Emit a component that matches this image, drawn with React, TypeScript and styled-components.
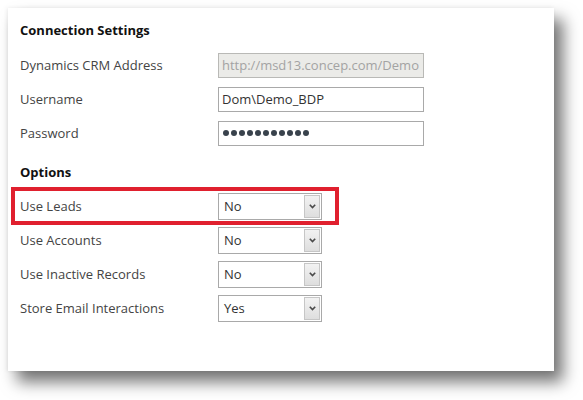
import styled, { createGlobalStyle } from 'styled-components'

const GlobalStyle = createGlobalStyle`
  html, body {
    margin: 0;
    padding: 0;
    background: #ffffff;
  }
  body {
    font-family: 'Open Sans', 'Noto Sans', 'Liberation Sans', sans-serif;
    color: #3b3b3b;
  }
`

const Page = styled.div`
  width: 583px;
  height: 400px;
  padding: 8px 0 0 8px;
  box-sizing: border-box;
  overflow: hidden;
`

const Panel = styled.div`
  width: 546px;
  height: 363px;
  box-sizing: border-box;
  padding: 0 0 0 12px;
  background: #ffffff;
  box-shadow: 9px 11px 15px rgba(0, 0, 0, 0.55), -1px 0 4px rgba(0, 0, 0, 0.08);
`

const SectionTitle = styled.h3<{ $top: number; $bottom: number }>`
  margin: 0;
  padding: ${(p) => p.$top}px 0 ${(p) => p.$bottom}px;
  font-size: 13px;
  line-height: 20px;
  font-weight: 700;
  color: #111111;
`

const Row = styled.div`
  display: grid;
  grid-template-columns: 198px auto;
  align-items: center;
  height: 34px;
  position: relative;
`

const HighlightRow = styled(Row)`
  &::after {
    content: '';
    position: absolute;
    left: -9px;
    top: -2px;
    width: 328px;
    height: 38px;
    box-sizing: border-box;
    border: 4px solid #e0202e;
    pointer-events: none;
  }
`

const Label = styled.span`
  font-size: 13px;
  line-height: 18px;
  color: #444444;
`

const TextField = styled.div<{ $disabled?: boolean }>`
  width: 206px;
  height: 25px;
  box-sizing: border-box;
  border: 1px solid ${(p) => (p.$disabled ? '#b9b9b6' : '#a9a9a9')};
  background: ${(p) => (p.$disabled ? '#ebebe8' : '#ffffff')};
  color: ${(p) => (p.$disabled ? '#a3a3a3' : '#333333')};
  padding: 0 3px;
  font-size: 13px;
  line-height: 23px;
  white-space: nowrap;
  overflow: hidden;
`

const Dots = styled.div`
  display: flex;
  align-items: center;
  gap: 2px;
  height: 100%;
  padding-left: 1px;
`

const Dot = styled.span`
  width: 6px;
  height: 6px;
  border-radius: 50%;
  background: #39424c;
`

const Select = styled.div`
  display: flex;
  width: 104px;
  height: 27px;
  box-sizing: border-box;
  border: 1px solid #a9a9a9;
  background: #ffffff;
`

const SelectValue = styled.span`
  flex: 1;
  padding-left: 5px;
  font-size: 13px;
  line-height: 25px;
  color: #333333;
`

const SelectArrow = styled.span`
  width: 16px;
  margin: 1px 1px 1px 0;
  box-sizing: border-box;
  border: 1px solid #c6c6c6;
  background: linear-gradient(#f2f2f2, #dedede);
  display: flex;
  align-items: center;
  justify-content: center;
`

const Chevron = () => (
  <svg width="7" height="5" viewBox="0 0 7 5">
    <path d="M0.8 0.8 L3.5 3.6 L6.2 0.8" fill="none" stroke="#4a4a4a" strokeWidth="1.6" />
  </svg>
)

const Dropdown = ({ value }: { value: string }) => (
  <Select>
    <SelectValue>{value}</SelectValue>
    <SelectArrow>
      <Chevron />
    </SelectArrow>
  </Select>
)

const options = [
  { label: 'Use Accounts', value: 'No' },
  { label: 'Use Inactive Records', value: 'No' },
  { label: 'Store Email Interactions', value: 'Yes' },
]

export default function App() {
  return (
    <>
      <GlobalStyle />
      <Page>
        <Panel>
          <SectionTitle $top={12} $bottom={8}>
            Connection Settings
          </SectionTitle>
          <Row>
            <Label>Dynamics CRM Address</Label>
            <TextField $disabled>http://msd13.concep.com/Demo</TextField>
          </Row>
          <Row>
            <Label>Username</Label>
            <TextField>Dom\Demo_BDP</TextField>
          </Row>
          <Row>
            <Label>Password</Label>
            <TextField>
              <Dots>
                {Array.from({ length: 11 }).map((_, i) => (
                  <Dot key={i} />
                ))}
              </Dots>
            </TextField>
          </Row>
          <SectionTitle $top={12} $bottom={7}>
            Options
          </SectionTitle>
          <HighlightRow>
            <Label>Use Leads</Label>
            <Dropdown value="No" />
          </HighlightRow>
          {options.map((o) => (
            <Row key={o.label}>
              <Label>{o.label}</Label>
              <Dropdown value={o.value} />
            </Row>
          ))}
        </Panel>
      </Page>
    </>
  )
}
